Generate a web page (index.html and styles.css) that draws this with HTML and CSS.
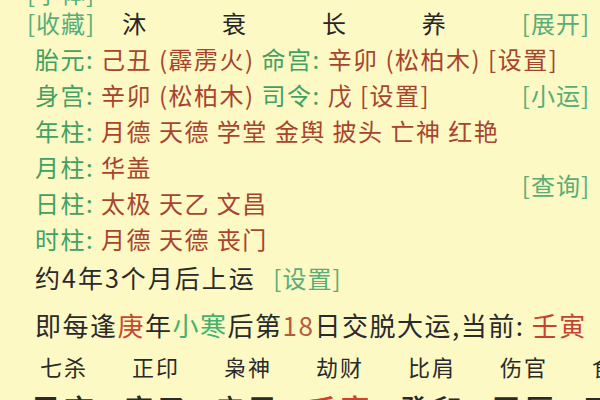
FILE: index.html
```html
<!DOCTYPE html>
<html lang="zh-CN">

<head>
    <meta charset="UTF-8">
    <title>大运排盘</title>
    <link rel="stylesheet" href="styles.css">
</head>

<body>
    <div class="chart">
        <div class="upper">
            <div class="main">
                <div class="row first"><span class="link">[字体]</span></div>
                <div class="row stages">
                    <span class="link stage-link">[收藏]</span>
                    <span class="stage">沐</span>
                    <span class="stage">衰</span>
                    <span class="stage">长</span>
                    <span class="stage">养</span>
                </div>
                <div class="row info">
                    <span class="label">胎元: </span><span class="value">己丑 (霹雳火)</span>
                    <span class="label">命宫: </span><span class="value">辛卯 (松柏木) [设置]</span>
                </div>
                <div class="row info">
                    <span class="label">身宫: </span><span class="value">辛卯 (松柏木)</span>
                    <span class="label">司令: </span><span class="value">戊 [设置]</span>
                </div>
                <div class="row info">
                    <span class="label">年柱: </span><span class="value">月德 天德 学堂 金舆 披头 亡神 红艳</span>
                </div>
                <div class="row info">
                    <span class="label">月柱: </span><span class="value">华盖</span>
                </div>
                <div class="row info">
                    <span class="label">日柱: </span><span class="value">太极 天乙 文昌</span>
                </div>
                <div class="row info">
                    <span class="label">时柱: </span><span class="value">月德 天德 丧门</span>
                </div>
            </div>
            <div class="side">
                <span class="link side-open">[展开]</span>
                <span class="link side-minor">[小运]</span>
                <span class="link side-query">[查询]</span>
            </div>
        </div>

        <div class="start-line">约4年3个月后上运 <span class="link">[设置]</span></div>
        <div class="switch-line">即每逢<span class="hl-red">庚</span>年<span class="hl-green">小寒</span>后第<span class="hl-num">18</span>日交脱大运,当前: <span class="hl-current">壬寅</span></div>

        <div class="gods">
            <span>七杀</span>
            <span>正印</span>
            <span>枭神</span>
            <span>劫财</span>
            <span>比肩</span>
            <span>伤官</span>
            <span>食神</span>
        </div>
        <div class="pillars">
            <span>己亥</span>
            <span>庚子</span>
            <span>辛丑</span>
            <span class="current">壬寅</span>
            <span>癸卯</span>
            <span>甲辰</span>
            <span>乙巳</span>
        </div>
    </div>
</body>

</html>
```

FILE: styles.css
```css
* {
    box-sizing: border-box;
    margin: 0;
    padding: 0;
}

body {
    width: 600px;
    height: 400px;
    overflow: hidden;
    background-color: #fcf9c5;
    color: #2a2a2a;
    font-family: "Noto Sans CJK SC", "Noto Sans", sans-serif;
}

.chart {
    margin-top: -20px;
    white-space: nowrap;
}

.upper {
    display: flex;
}

.main {
    flex: 1;
    min-width: 0;
}

.row {
    height: 36px;
    line-height: 36px;
    font-size: 24px;
    letter-spacing: 1.5px;
    padding-left: 35px;
}

/* top row is mostly scrolled out of view */
.row.first {
    height: 25px;
    line-height: 25px;
    padding-left: 27px;
}

.link {
    color: #58ad78;
    font-size: 24px;
    letter-spacing: 1px;
}

.stages {
    display: flex;
    padding-left: 27px;
}

.stage-link {
    width: 100px;
}

.stage {
    width: 105px;
    color: #262626;
}

.label {
    color: #43a063;
}

.value {
    color: #a8442d;
}

/* right hand column of links */
.side {
    display: flex;
    flex-direction: column;
    align-items: flex-end;
    padding-right: 10px;
    line-height: 36px;
}

.side-open {
    margin-top: 25px;
}

.side-minor {
    margin-top: 36px;
}

.side-query {
    margin-top: 54px;
}

.start-line {
    height: 40px;
    line-height: 40px;
    padding-left: 35px;
    font-size: 25px;
    letter-spacing: 2px;
}

.start-line .link {
    margin-left: 10px;
}

.switch-line {
    height: 56px;
    line-height: 56px;
    padding-left: 35px;
    font-size: 26px;
    letter-spacing: 1.5px;
}

.hl-red {
    color: #c9472c;
}

.hl-green {
    color: #45b06c;
}

.hl-num {
    color: #b55a3c;
}

.hl-current {
    color: #c24430;
}

.gods {
    display: flex;
    height: 26px;
    line-height: 26px;
    padding-left: 40px;
    font-size: 22px;
    letter-spacing: 2px;
}

.gods span,
.pillars span {
    flex: 0 0 92px;
}

.pillars {
    display: flex;
    height: 58px;
    line-height: 58px;
    padding-left: 31px;
    font-size: 30px;
    letter-spacing: 3px;
    font-weight: 500;
}

.pillars .current {
    color: #d2412a;
}
```
